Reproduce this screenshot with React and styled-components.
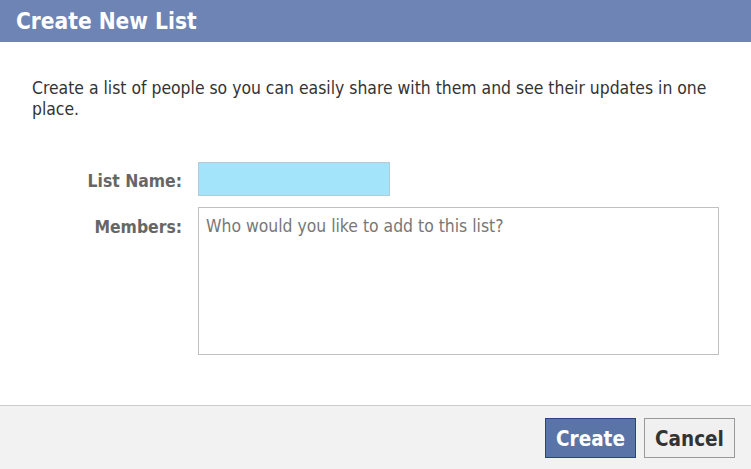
import React from "react";
import styled, { createGlobalStyle } from "styled-components";

const Global = createGlobalStyle`
  html, body {
    margin: 0;
    padding: 0;
    background: #fff;
  }
  body {
    font-family: "DejaVu Sans Condensed", "DejaVu Sans", Tahoma, sans-serif;
  }
`;

const Dialog = styled.div`
  width: 751px;
  height: 469px;
  display: flex;
  flex-direction: column;
  background: #fff;
`;

const Header = styled.div`
  height: 42px;
  background: #6d84b4;
  color: #fff;
  font-weight: bold;
  font-size: 22.5px;
  display: flex;
  align-items: center;
  padding-left: 16px;
`;

const Body = styled.div`
  flex: 1;
  padding: 36px 32px 0 32px;
`;

const Intro = styled.p`
  margin: 0;
  font-size: 17.4px;
  line-height: 21px;
  color: #333;
`;

const Form = styled.div`
  display: grid;
  grid-template-columns: 150px 520px;
  column-gap: 16px;
  row-gap: 11px;
  margin-top: 42px;
`;

const Label = styled.label`
  text-align: right;
  font-weight: bold;
  font-size: 17.4px;
  color: #666;
  padding-top: ${(p) => p.$top}px;
`;

const NameInput = styled.input`
  width: 192px;
  height: 34px;
  box-sizing: border-box;
  background: #a3e4fb;
  border: 1px solid #b5cbd3;
  outline: 0;
  font: inherit;
`;

const MembersBox = styled.textarea`
  width: 521px;
  height: 148px;
  box-sizing: border-box;
  border: 1px solid #c0c0c0;
  padding: 8px 7px 5px;
  font-family: inherit;
  font-size: 17.4px;
  resize: none;
  outline: 0;
  &::placeholder {
    color: #777;
  }
`;

const Footer = styled.div`
  height: 63px;
  background: #f2f2f2;
  border-top: 1px solid #ccc;
  display: flex;
  justify-content: flex-end;
  align-items: center;
  gap: 8px;
  padding-right: 16px;
`;

const Button = styled.button`
  height: 40px;
  width: 91px;
  padding-top: 3px;
  font-family: inherit;
  font-size: 20.5px;
  font-weight: bold;
  cursor: pointer;
  background: ${(p) => (p.$primary ? "#5b74a8" : "#f0f0f0")};
  color: ${(p) => (p.$primary ? "#fff" : "#333")};
  border: 1px solid ${(p) => (p.$primary ? "#29447e" : "#999")};
`;

export default function App() {
  return (
    <Dialog>
      <Global />
      <Header>Create New List</Header>
      <Body>
        <Intro>
          Create a list of people so you can easily share with them and see
          their updates in one place.
        </Intro>
        <Form>
          <Label $top={9}>List Name:</Label>
          <div>
            <NameInput />
          </div>
          <Label $top={10}>Members:</Label>
          <MembersBox placeholder="Who would you like to add to this list?" />
        </Form>
      </Body>
      <Footer>
        <Button $primary>Create</Button>
        <Button>Cancel</Button>
      </Footer>
    </Dialog>
  );
}
